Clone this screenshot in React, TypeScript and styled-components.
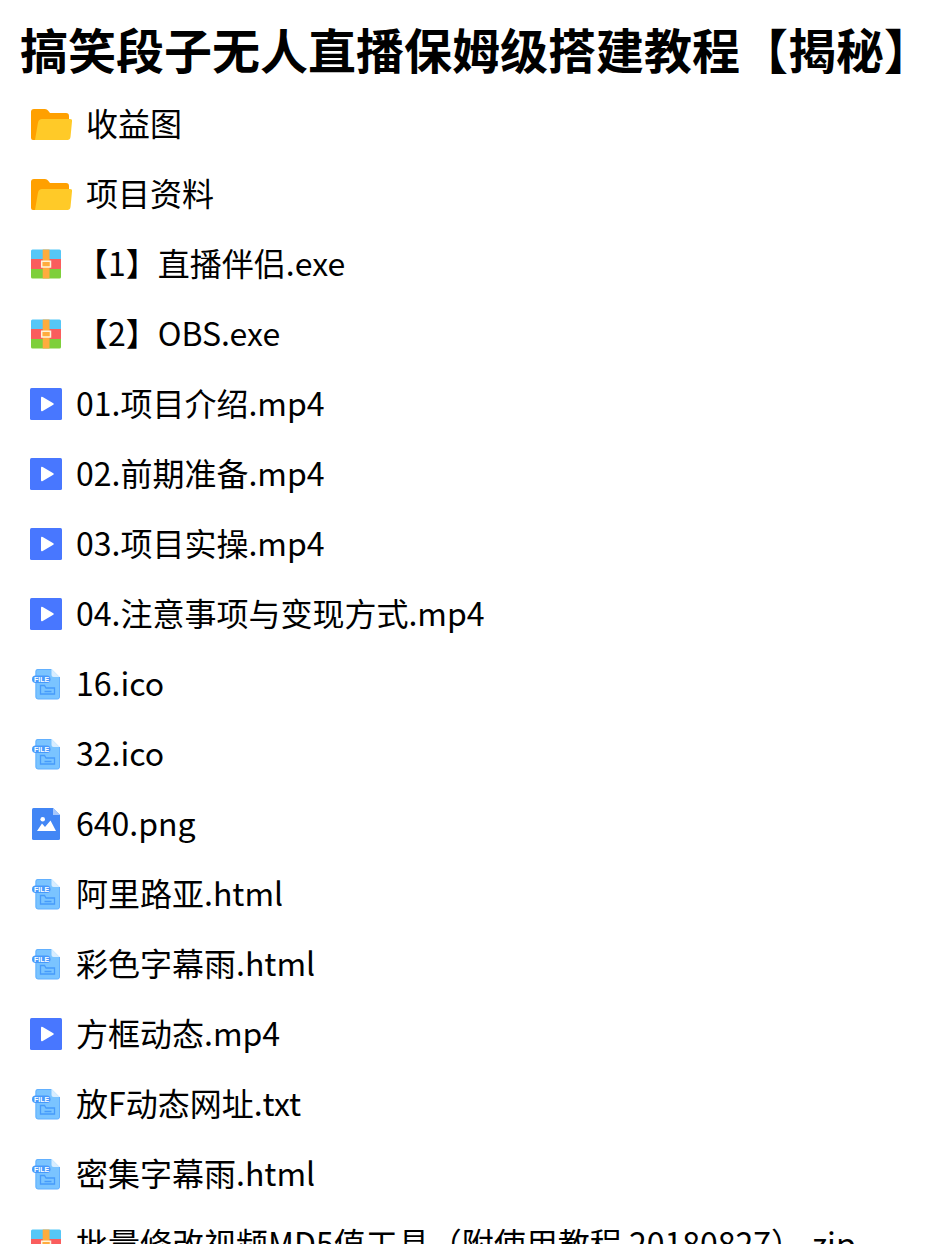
import React from "react";
import styled, { createGlobalStyle } from "styled-components";

const GlobalStyle = createGlobalStyle`
  *, *::before, *::after { box-sizing: border-box; }
  body {
    margin: 0;
    background: #fff;
    color: #000;
    font-family: "Noto Sans CJK SC", "Noto Sans", sans-serif;
  }
`;

const Page = styled.main`
  max-height: 100vh;
  overflow: hidden;
  padding: 8px 20px 0;
`;

const Title = styled.h1`
  margin: 0;
  font-size: 48px;
  line-height: 80px;
  font-weight: 700;
  white-space: nowrap;
`;

const FileList = styled.ul`
  margin: 0;
  padding: 1px 10px 0;
  list-style: none;
`;

const FileRow = styled.li`
  display: flex;
  align-items: center;
  gap: 14px;
  height: 70px;
`;

const Icon = styled.svg<{ $wide?: boolean }>`
  flex: none;
  display: block;
  width: ${(p) => (p.$wide ? 42 : 32)}px;
  height: 32px;
`;

const FileName = styled.span`
  padding-bottom: 4px;
  font-size: 32px;
  line-height: 48px;
  white-space: nowrap;
`;

const IconLabel = styled.text`
  fill: #fff;
  font-family: "Liberation Sans", sans-serif;
  font-size: 7px;
  font-weight: 700;
`;

const FolderIcon = () => (
  <Icon $wide viewBox="0 0 42 32" aria-hidden="true">
    <path d="M1 4a3 3 0 0 1 3-3h11q2 0 3 1.500l2 2.500h16q3 0 3 3v8L6 32H3q-2 0-2-2z" fill="#ffa000" />
    <path d="M12 11h28q2.500 0 2 2.500L40.500 29q-.4 3-3 3H5l3-17.500q.7-3.500 4-3.500z" fill="#ffca28" />
  </Icon>
);

const ArchiveIcon = () => (
  <Icon viewBox="0 0 32 32" aria-hidden="true">
    <path d="M1 11V3q0-1.500 1.500-1.500h27Q31 1.500 31 3v8z" fill="#55c7f7" />
    <path d="M1 11h30v10H1z" fill="#fa5d5d" />
    <path d="M1 21h30v8q0 1.500-1.500 1.500h-27Q1 30.500 1 29z" fill="#7ecf3b" />
    <path d="M12.700 1.500h6.800v29h-6.800z" fill="#ffac3e" />
    <path d="M11.700 13.200h8.800v5.800h-8.800z" fill="#ffac3e" stroke="#fff3dc" strokeWidth="1.500" />
  </Icon>
);

const VideoIcon = () => (
  <Icon viewBox="0 0 32 32" aria-hidden="true">
    <rect width="32" height="32" rx="1.500" fill="#4877ff" />
    <path d="M11 10q0-2 1.700-1l10.600 6.300q1.200.7 0 1.400L12.700 23Q11 24 11 22z" fill="#fff" />
  </Icon>
);

const DocumentIcon = () => (
  <Icon viewBox="0 0 32 32" aria-hidden="true">
    <path d="M5.500 3q0-2 2-2h14l8 8v20q0 2-2 2h-20q-2 0-2-2z" fill="#7ac4ff" />
    <path d="M21 1.500H8q-2 0-2 2V29q0 2 2 2h19.500q2 0 2-2V9" fill="none" stroke="#62b0ff" strokeWidth="1" />
    <path d="M21.500 1l8 8h-6q-2 0-2-2z" fill="#d9eeff" />
    <rect x="2" y="7.500" width="18.500" height="7.500" rx="3.750" fill="#4799fb" />
    <IconLabel x="4" y="13.800">FILE</IconLabel>
    <path d="M10.500 17.500h4l1.500 2.500h8.500v6h-14zM14.500 23.500h7" fill="none" stroke="#469bfb" strokeWidth="1.300" />
  </Icon>
);

const ImageIcon = () => (
  <Icon viewBox="0 0 32 32" aria-hidden="true">
    <path d="M2 1.500Q2 0 3.500 0H23l7 7v23.500q0 1.500-1.500 1.500h-25Q2 32 2 30.500z" fill="#4286f5" />
    <path d="M23 0l7 7h-7z" fill="#a7c7fb" />
    <circle cx="12.700" cy="11.300" r="2.300" fill="#fff" />
    <path d="M7 23l5-7.500 3 3.500 5.500-6.500L26 23z" fill="#fff" />
  </Icon>
);

const icons = {
  folder: FolderIcon,
  archive: ArchiveIcon,
  video: VideoIcon,
  document: DocumentIcon,
  image: ImageIcon,
};

const files: { name: string; kind: keyof typeof icons }[] = [
  { name: "收益图", kind: "folder" },
  { name: "项目资料", kind: "folder" },
  { name: "【1】直播伴侣.exe", kind: "archive" },
  { name: "【2】OBS.exe", kind: "archive" },
  { name: "01.项目介绍.mp4", kind: "video" },
  { name: "02.前期准备.mp4", kind: "video" },
  { name: "03.项目实操.mp4", kind: "video" },
  { name: "04.注意事项与变现方式.mp4", kind: "video" },
  { name: "16.ico", kind: "document" },
  { name: "32.ico", kind: "document" },
  { name: "640.png", kind: "image" },
  { name: "阿里路亚.html", kind: "document" },
  { name: "彩色字幕雨.html", kind: "document" },
  { name: "方框动态.mp4", kind: "video" },
  { name: "放F动态网址.txt", kind: "document" },
  { name: "密集字幕雨.html", kind: "document" },
  { name: "批量修改视频MD5值工具（附使用教程 20180827）.zip", kind: "archive" },
];

export default function App() {
  return (
    <>
      <GlobalStyle />
      <Page lang="zh-CN">
        <Title>搞笑段子无人直播保姆级搭建教程【揭秘】</Title>
        <FileList>
          {files.map(({ name, kind }) => {
            const KindIcon = icons[kind];
            return (
              <FileRow key={name}>
                <KindIcon />
                <FileName>{name}</FileName>
              </FileRow>
            );
          })}
        </FileList>
      </Page>
    </>
  );
}
